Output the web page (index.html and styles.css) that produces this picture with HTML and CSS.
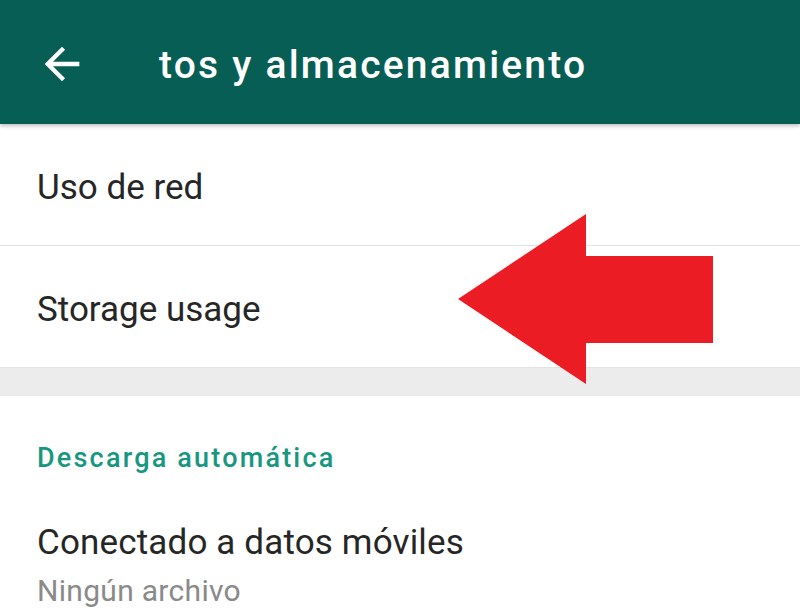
FILE: index.html
```html
<!DOCTYPE html>
<html lang="es">
<head>
<meta charset="utf-8">
<link rel="stylesheet" href="styles.css">
</head>
<body>
<div class="screen">
  <header class="appbar">
    <svg class="back" viewBox="0 0 24 24" width="52" height="52"><path d="M20 11H7.83l5.59-5.59L12 4l-8 8 8 8 1.41-1.41L7.83 13H20v-2z" fill="#fff"/></svg>
    <h1 class="title">tos y almacenamiento</h1>
  </header>
  <div class="item"><span class="item-title">Uso de red</span></div>
  <div class="item"><span class="item-title">Storage usage</span></div>
  <div class="band"></div>
  <div class="section-head">Descarga automática</div>
  <div class="item2">
    <div class="item-title wide">Conectado a datos móviles</div>
    <div class="item-sub">Ningún archivo</div>
  </div>
  <svg class="pointer" viewBox="0 0 260 172" width="260" height="172"><polygon points="0,85 128,0 128,42 255,42 255,129 128,129 128,170" fill="#ec1c24"/></svg>
</div>
</body>
</html>
```
FILE: styles.css
```css
html, body { margin: 0; padding: 0; background: #fff; }
.screen {
  position: relative;
  width: 800px;
  height: 610px;
  overflow: hidden;
  font-family: Roboto, "Noto Sans", sans-serif;
}
.appbar {
  height: 124px;
  background: #075e54;
  display: flex;
  align-items: center;
  box-shadow: 0 2px 4px rgba(0,0,0,0.25);
  position: relative;
  z-index: 1;
}
.back { margin-left: 36px; margin-top: 4px; }
.title {
  margin: 6px 0 0 71px;
  color: #fff;
  font-size: 39px;
  font-weight: 500;
  letter-spacing: 2.2px;
}
.item {
  height: 115px;
  padding-top: 6px;
  border-bottom: 1px solid #e2e2e2;
  display: flex;
  align-items: center;
  padding-left: 37px;
}
.item-title { font-size: 35px; line-height: 40px; color: #262626; }
.wide { letter-spacing: 0.15px; }
.band { height: 28px; background: #ececec; }
.section-head {
  padding: 46px 0 0 37px;
  font-size: 27px;
  line-height: 32px;
  font-weight: 500;
  letter-spacing: 2.2px;
  color: #17977f;
}
.item2 { padding: 49px 0 0 37px; }
.item-sub { font-size: 30px; line-height: 36px; color: #8a8a8a; margin-top: 10px; letter-spacing: 0.3px; }
.pointer { position: absolute; left: 458px; top: 214px; }
```
